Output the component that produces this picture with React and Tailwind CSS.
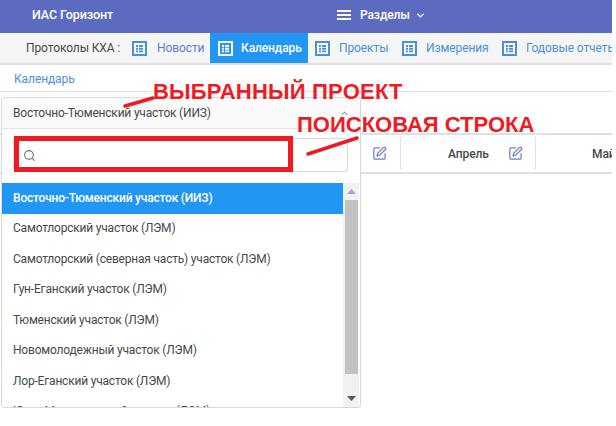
import React from "react";
import { ChevronDown, ChevronUp, Search, SquarePen } from "lucide-react";

const tabs = [
  { name: "Новости", cls: "w-[81px] pl-[3px] gap-[10px] text-[#5c7fd8]" },
  { name: "Календарь", active: true, cls: "w-[98px] pl-[8px] gap-[8px] bg-[#2196f3] text-white font-medium" },
  { name: "Проекты", cls: "w-[94px] pl-[7px] gap-[9px] text-[#4a90d9]" },
  { name: "Измерения", cls: "w-[100px] gap-[9px] text-[#4a90d9]" },
  { name: "Годовые отчеты", cls: "w-[110px] gap-[9px] text-[#4a90d9]" },
];

const options = [
  "Восточно-Тюменский участок (ИИЗ)",
  "Самотлорский участок (ЛЭМ)",
  "Самотлорский (северная часть) участок (ЛЭМ)",
  "Гун-Еганский участок (ЛЭМ)",
  "Тюменский участок (ЛЭМ)",
  "Новомолодежный участок (ЛЭМ)",
  "Лор-Еганский участок (ЛЭМ)",
  "Юган-Мамонтовский участок (ЛЭМ)",
];

const TableIcon = ({ active }) => (
  <svg width="15" height="15" viewBox="0 0 15 15" className="shrink-0">
    <rect x="1" y="1" width="13" height="13" fill={active ? "#2196f3" : "#fff"} stroke={active ? "#fff" : "#4a90d9"} strokeWidth="2" />
    <path d="M4 4h2v2H4zM7 4h4v2H7zM4 6.8h2v2H4zM7 6.8h4v2H7zM4 9.6h2v1.6H4zM7 9.6h4v1.6H7z" fill={active ? "#fff" : "#4a90d9"} />
  </svg>
);

export default function App() {
  return (
    <div className="relative w-[612px] h-[426px] overflow-hidden bg-white text-[12px] tracking-[-0.1px] text-[#484848] font-['Roboto',sans-serif]">
      <div className="flex h-[33px] items-start bg-[#5c6bc0] pt-[6px] text-white">
        <div className="w-[337px] pl-[32px] text-[12.5px] font-medium">ИАС Горизонт</div>
        <div className="flex items-center">
          <div className="flex w-[14px] flex-col gap-[2px]">
            <div className="h-[2px] bg-white" />
            <div className="h-[2px] bg-white" />
            <div className="h-[2px] bg-white" />
          </div>
          <span className="ml-[9px] font-medium">Разделы</span>
          <ChevronDown size={11} strokeWidth={3} className="ml-[5px]" />
        </div>
      </div>

      <div className="flex h-[32px] items-stretch border-b-2 border-[#e0e0e0] bg-[#f5f5f5] pl-[26px] whitespace-nowrap overflow-hidden">
        <div className="flex w-[104px] items-center">Протоколы КХА :</div>
        {tabs.map((t) => (
          <div key={t.name} className={"flex shrink-0 items-center " + t.cls}>
            <TableIcon active={t.active} />
            <span>{t.name}</span>
          </div>
        ))}
      </div>

      <div className="h-[27px] border-b border-[#e0e0e0] pl-[14px] pt-[5px] text-[#4a90d9]">Календарь</div>

      <div className="mt-[41px] flex h-[41px] overflow-hidden border-y-2 border-[#e0e0e0] pl-[361px] whitespace-nowrap">
        <div className="flex w-[39px] shrink-0 items-center justify-center pr-[3px]">
          <SquarePen size={15} className="text-[#6f7fc4]" />
        </div>
        <div className="my-[2px] w-px shrink-0 bg-[#e0e0e0]" />
        <div className="flex w-[134px] shrink-0 items-center pl-[47px]">
          <span className="font-medium">Апрель</span>
          <SquarePen size={15} className="ml-[19px] text-[#6f7fc4]" />
        </div>
        <div className="my-[2px] w-px shrink-0 bg-[#e0e0e0]" />
        <div className="shrink-0 pl-[56px] pt-[10px] font-medium">Май</div>
      </div>

      {/* выпадающий список */}
      <div className="absolute left-[1px] top-[97px] flex h-[311px] w-[360px] flex-col overflow-hidden rounded-[3px] border border-[#d9d9d9] bg-white tracking-[-0.2px]">
        <div className="flex h-[31px] shrink-0 items-center justify-between border-b border-[#e5e5e5] bg-[#fafafa] pl-[11px] pr-[10px]">
          <span>Восточно-Тюменский участок (ИИЗ)</span>
          <ChevronUp size={11} className="text-[#4a6a8a]" />
        </div>
        <div className="h-[54px] shrink-0 pl-[11px] pr-[12px] pt-[9px]">
          <div className="flex h-[34px] items-center rounded-[3px] border border-[#d9d9d9] pl-[9px]">
            <Search size={13} className="text-[#6b7280]" />
          </div>
        </div>
        <div className="relative min-h-0 flex-1 overflow-hidden">
          <div className="mr-[17px]">
            {options.map((o, i) => (
              <div key={o} className={i === 0 ? "flex h-[30.5px] items-center bg-[#2196f3] pb-[1px] pl-[11px] font-medium text-white" : "flex h-[30.5px] items-center pb-[1px] pl-[11px]"}>
                {o}
              </div>
            ))}
          </div>
          <div className="absolute right-[1px] top-0 bottom-0 flex w-[16px] flex-col items-center bg-[#f1f1f1]">
            <svg width="9" height="5" className="mt-[6px]"><path d="M0 5L4.5 0L9 5z" fill="#a3a3d0" /></svg>
            <div className="mt-[6px] h-[174px] w-[13px] bg-[#c1c1c1]" />
            <svg width="9" height="5" className="mt-auto mb-[6px]"><path d="M0 0L4.5 5L9 0z" fill="#555" /></svg>
          </div>
        </div>
      </div>

      {/* пометки поверх скриншота */}
      <div className="absolute left-[153px] top-[78px] font-['Liberation_Sans',sans-serif] text-[22px] font-bold tracking-[0.2px] leading-[28px] text-[#ed1c24]">ВЫБРАННЫЙ ПРОЕКТ</div>
      <div className="absolute left-[297px] top-[111px] font-['Liberation_Sans',sans-serif] text-[22px] font-bold tracking-normal leading-[28px] text-[#ed1c24]">ПОИСКОВАЯ СТРОКА</div>
      <div className="absolute left-[14px] top-[136px] h-[36px] w-[279px] border-[5px] border-[#ed1c24]" />
      <svg className="absolute left-0 top-0" width="612" height="426">
        <path d="M125 106L153 98" stroke="#ed1c24" strokeWidth="3.5" strokeLinecap="round" />
        <path d="M308 154L357 138" stroke="#ed1c24" strokeWidth="3.5" strokeLinecap="round" />
      </svg>
    </div>
  );
}
